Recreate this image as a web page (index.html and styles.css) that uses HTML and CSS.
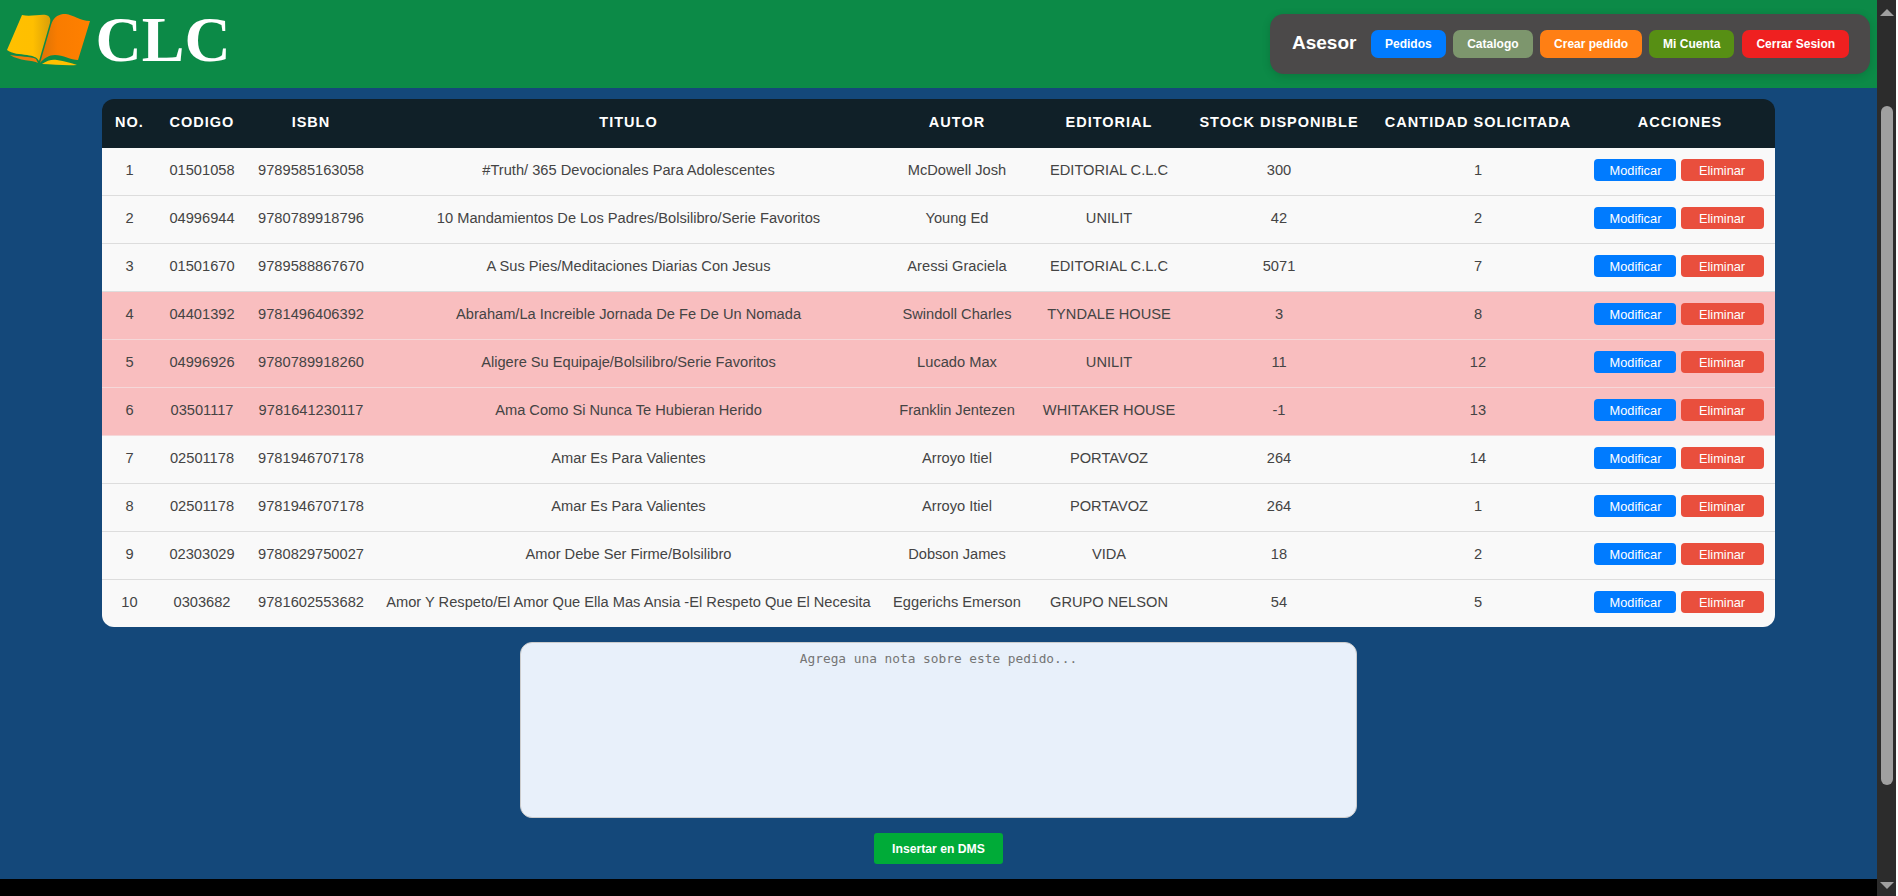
FILE: index.html
```html
<!DOCTYPE html>
<html lang="en">
<head>
    <meta charset="UTF-8">
    <meta name="viewport" content="width=device-width, initial-scale=1.0">
    <title>Pedido CLC</title>
    <link rel="stylesheet" href="styles.css">
</head>
<body>
    <div class="window">
        <div class="main">
            <header class="topbar">
                <div class="logo">
                    <svg class="book" width="84" height="52" viewBox="0 0 84 52">
                        <defs>
                            <linearGradient id="leftpage" x1="0" x2="1" y1="0" y2="0">
                                <stop offset="0" stop-color="#ffc000"/>
                                <stop offset="0.6" stop-color="#ffbf00"/>
                                <stop offset="1" stop-color="#d99f0a"/>
                            </linearGradient>
                            <linearGradient id="rightpage" x1="0" x2="1" y1="0" y2="0">
                                <stop offset="0" stop-color="#d87208"/>
                                <stop offset="0.35" stop-color="#f97c00"/>
                                <stop offset="1" stop-color="#ff8000"/>
                            </linearGradient>
                        </defs>
                        <path d="M3 41 C12 43 24 42 29 45 L31 49 C26 46 12 47 3 41 Z" fill="#f07c0a"/>
                        <path d="M35 50 C40 46 46 45 50 46 C58 47 64 49 70 51 C58 52 46 50 35 50 Z" fill="#ffc000"/>
                        <path d="M15 1 C23 3 33 0 39 1 C43 2 44 5 43 9 L32 47 C30 43 26 42 20 41 C13 40 5 40 0 36 Z" fill="url(#leftpage)"/>
                        <path d="M33 49 L44 11 C46 4 50 1 56 0 C64 -1 72 7 83 7 L71 46 C64 46 56 41 48 41 C42 41 37 44 33 49 Z" fill="url(#rightpage)"/>
                    </svg>
                    <span class="logo-text">CLC</span>
                </div>
                <nav class="panel">
                    <span class="role">Asesor</span>
                    <a class="nav-btn btn-pedidos">Pedidos</a>
                    <a class="nav-btn btn-catalogo">Catalogo</a>
                    <a class="nav-btn btn-crear">Crear pedido</a>
                    <a class="nav-btn btn-cuenta">Mi Cuenta</a>
                    <a class="nav-btn btn-cerrar">Cerrar Sesion</a>
                </nav>
            </header>

            <table class="orders">
                <colgroup>
                    <col class="c-no"><col class="c-codigo"><col class="c-isbn"><col class="c-titulo"><col class="c-autor">
                    <col class="c-editorial"><col class="c-stock"><col class="c-cantidad"><col class="c-acciones">
                </colgroup>
                <thead>
                    <tr>
                        <th>NO.</th><th>CODIGO</th><th>ISBN</th><th class="titulo">TITULO</th><th>AUTOR</th>
                        <th>EDITORIAL</th><th class="stock">STOCK DISPONIBLE</th><th>CANTIDAD SOLICITADA</th><th>ACCIONES</th>
                    </tr>
                </thead>
                <tbody>
                    <tr>
                        <td>1</td><td>01501058</td><td>9789585163058</td><td class="titulo">#Truth/ 365 Devocionales Para Adolescentes</td><td>McDowell Josh</td>
                        <td>EDITORIAL C.L.C</td><td class="stock">300</td><td>1</td>
                        <td class="acciones"><button class="mod">Modificar</button> <button class="del">Eliminar</button></td>
                    </tr>
                    <tr>
                        <td>2</td><td>04996944</td><td>9780789918796</td><td class="titulo">10 Mandamientos De Los Padres/Bolsilibro/Serie Favoritos</td><td>Young Ed</td>
                        <td>UNILIT</td><td class="stock">42</td><td>2</td>
                        <td class="acciones"><button class="mod">Modificar</button> <button class="del">Eliminar</button></td>
                    </tr>
                    <tr>
                        <td>3</td><td>01501670</td><td>9789588867670</td><td class="titulo">A Sus Pies/Meditaciones Diarias Con Jesus</td><td>Aressi Graciela</td>
                        <td>EDITORIAL C.L.C</td><td class="stock">5071</td><td>7</td>
                        <td class="acciones"><button class="mod">Modificar</button> <button class="del">Eliminar</button></td>
                    </tr>
                    <tr class="low">
                        <td>4</td><td>04401392</td><td>9781496406392</td><td class="titulo">Abraham/La Increible Jornada De Fe De Un Nomada</td><td>Swindoll Charles</td>
                        <td>TYNDALE HOUSE</td><td class="stock">3</td><td>8</td>
                        <td class="acciones"><button class="mod">Modificar</button> <button class="del">Eliminar</button></td>
                    </tr>
                    <tr class="low">
                        <td>5</td><td>04996926</td><td>9780789918260</td><td class="titulo">Aligere Su Equipaje/Bolsilibro/Serie Favoritos</td><td>Lucado Max</td>
                        <td>UNILIT</td><td class="stock">11</td><td>12</td>
                        <td class="acciones"><button class="mod">Modificar</button> <button class="del">Eliminar</button></td>
                    </tr>
                    <tr class="low">
                        <td>6</td><td>03501117</td><td>9781641230117</td><td class="titulo">Ama Como Si Nunca Te Hubieran Herido</td><td>Franklin Jentezen</td>
                        <td>WHITAKER HOUSE</td><td class="stock">-1</td><td>13</td>
                        <td class="acciones"><button class="mod">Modificar</button> <button class="del">Eliminar</button></td>
                    </tr>
                    <tr>
                        <td>7</td><td>02501178</td><td>9781946707178</td><td class="titulo">Amar Es Para Valientes</td><td>Arroyo Itiel</td>
                        <td>PORTAVOZ</td><td class="stock">264</td><td>14</td>
                        <td class="acciones"><button class="mod">Modificar</button> <button class="del">Eliminar</button></td>
                    </tr>
                    <tr>
                        <td>8</td><td>02501178</td><td>9781946707178</td><td class="titulo">Amar Es Para Valientes</td><td>Arroyo Itiel</td>
                        <td>PORTAVOZ</td><td class="stock">264</td><td>1</td>
                        <td class="acciones"><button class="mod">Modificar</button> <button class="del">Eliminar</button></td>
                    </tr>
                    <tr>
                        <td>9</td><td>02303029</td><td>9780829750027</td><td class="titulo">Amor Debe Ser Firme/Bolsilibro</td><td>Dobson James</td>
                        <td>VIDA</td><td class="stock">18</td><td>2</td>
                        <td class="acciones"><button class="mod">Modificar</button> <button class="del">Eliminar</button></td>
                    </tr>
                    <tr>
                        <td>10</td><td>0303682</td><td>9781602553682</td><td class="titulo">Amor Y Respeto/El Amor Que Ella Mas Ansia -El Respeto Que El Necesita</td><td>Eggerichs Emerson</td>
                        <td>GRUPO NELSON</td><td class="stock">54</td><td>5</td>
                        <td class="acciones"><button class="mod">Modificar</button> <button class="del">Eliminar</button></td>
                    </tr>
                </tbody>
            </table>

            <form class="note">
                <textarea placeholder="Agrega una nota sobre este pedido..."></textarea>
                <button type="button" class="insert">Insertar en DMS</button>
            </form>
        </div>
    </div>

    <div class="scrollbar">
        <span class="arrow-up"></span>
        <span class="thumb"></span>
        <span class="arrow-down"></span>
    </div>
</body>
</html>
```

FILE: styles.css
```css
*{
    padding: 0px;
    margin: 0px;
    box-sizing: border-box;
}
body{
    display: flex;
    height: 896px;
    overflow: hidden;
    background-color: #fff;
    font-family: "Liberation Sans", Arial, sans-serif;
}
.window{
    width: 1877px;
    background-color: #000;
}
.main{
    height: 879px;
    background-color: #14487a;
}

/* header */
.topbar{
    height: 88px;
    background-color: #0c8a47;
    display: flex;
    justify-content: space-between;
    align-items: flex-start;
    padding: 14px 7px 0px 7px;
}
.logo{
    display: flex;
    align-items: center;
    gap: 4.6px;
}
.logo-text{
    font-family: "Liberation Serif", "Times New Roman", serif;
    font-weight: bold;
    font-size: 64px;
    line-height: 52px;
    color: #fff;
}
.panel{
    width: 600px;
    height: 60px;
    background-color: #4b4949;
    border-radius: 14px;
    box-shadow: 0px 2px 8px rgba(0, 0, 0, 0.15);
    display: flex;
    align-items: center;
    padding-left: 22px;
    gap: 7px;
}
.role{
    font-size: 19px;
    font-weight: bold;
    color: #fff;
    margin: 0px 7.6px 2px 0px;
}
.nav-btn{
    height: 28px;
    line-height: 28px;
    padding: 0px 14px;
    border-radius: 7px;
    font-size: 12px;
    font-weight: bold;
    color: #fff;
}
.btn-pedidos{ background-color: #007bff; }
.btn-catalogo{ background-color: #7d966d; padding: 0px 14.5px; }
.btn-crear{ background-color: #ff7f14; }
.btn-cuenta{ background-color: #578f14; }
.btn-cerrar{ background-color: #ef2020; margin-left: 1px; }

/* table */
.orders{
    width: 1673px;
    margin: 11px auto 0px;
    table-layout: fixed;
    border-collapse: separate;
    border-spacing: 0px;
    border-radius: 12px;
    overflow: hidden;
    font-size: 14.65px;
    color: #444;
}
.c-no{ width: 55px; }
.c-codigo{ width: 90px; }
.c-isbn{ width: 128px; }
.c-titulo{ width: 506px; }
.c-autor{ width: 152px; }
.c-editorial{ width: 152px; }
.c-stock{ width: 186px; }
.c-cantidad{ width: 214px; }
.c-acciones{ width: 190px; }
th{
    height: 49px;
    padding-bottom: 4px;
    background-color: #102028;
    color: #fff;
    font-size: 14.5px;
    letter-spacing: 1px;
    white-space: nowrap;
}
td{
    height: 48px;
    padding-bottom: 3px;
    text-align: center;
    background-color: #f9f9f9;
    border-bottom: 1px solid #ddd;
    white-space: nowrap;
}
.titulo{ padding-left: 1px; }
.stock{ padding-left: 2px; }
.acciones{ padding-right: 2px; }
tbody tr:last-child td{
    height: 47px;
    border-bottom: none;
}
.low td{
    background-color: #f9bebf;
    border-bottom-color: #f5d8d9;
}
td button{
    width: 82px;
    height: 22px;
    border: none;
    border-radius: 4px;
    font-family: inherit;
    font-size: 12.8px;
    color: #fff;
}
.mod{ background-color: #007bff; }
td .del{ width: 83px; background-color: #e94f3d; }

/* nota */
.note{
    display: flex;
    flex-direction: column;
    align-items: center;
    padding-top: 15px;
}
textarea{
    width: 837px;
    height: 176px;
    background-color: #e8f0fa;
    border: 1px solid #ccc;
    border-radius: 12px;
    padding: 8px 10px;
    text-align: center;
    font-family: "DejaVu Sans Mono", monospace;
    font-size: 12.8px;
    outline: none;
    resize: none;
}
.insert{
    margin-top: 15px;
    width: 129px;
    height: 31px;
    border: none;
    border-radius: 3px;
    background-color: #00ab38;
    color: #fff;
    font-family: inherit;
    font-size: 12.2px;
    font-weight: bold;
}

/* barra de scroll */
.scrollbar{
    width: 19px;
    height: 896px;
    background-color: #2c2c2c;
    display: flex;
    flex-direction: column;
    align-items: center;
    padding: 9px 0px 7px;
}
.arrow-up, .arrow-down{
    width: 0px;
    height: 0px;
    border-left: 7px solid transparent;
    border-right: 7px solid transparent;
}
.arrow-up{
    border-bottom: 7px solid #a0a0a0;
}
.arrow-down{
    margin-top: auto;
    border-top: 7px solid #a0a0a0;
}
.thumb{
    width: 12px;
    height: 679px;
    margin-top: 90px;
    border-radius: 6px;
    background-color: #a0a0a0;
}
```
